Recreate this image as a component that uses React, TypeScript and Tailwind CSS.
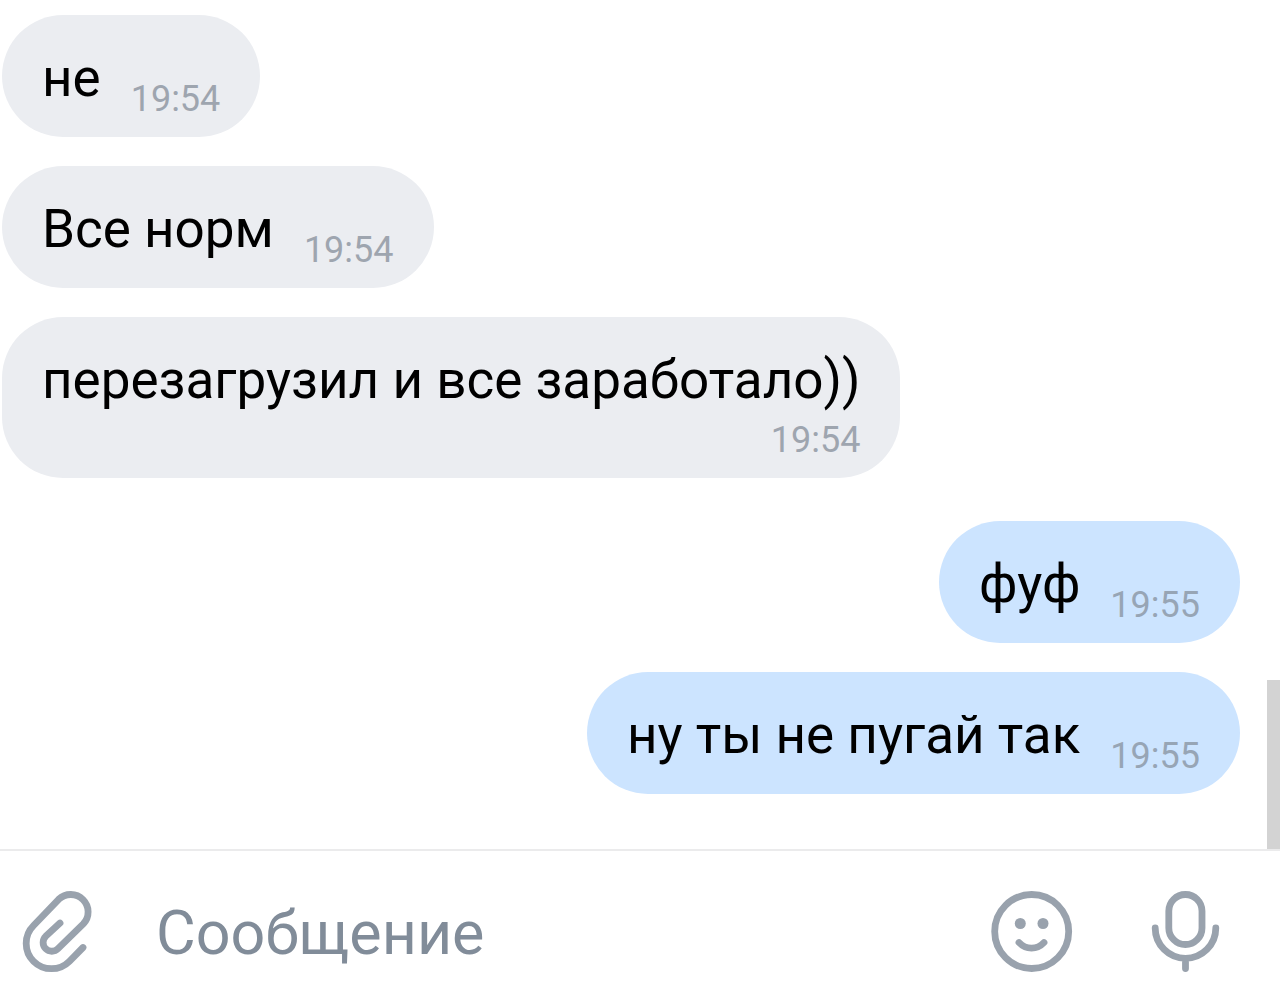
import clsx from "clsx";

type Message = {
  id: number;
  text: string;
  time: string;
  timeBelow?: boolean;
};

type Group = {
  own: boolean;
  messages: Message[];
};

const groups: Group[] = [
  {
    own: false,
    messages: [
      { id: 1, text: "не", time: "19:54" },
      { id: 2, text: "Все норм", time: "19:54" },
      { id: 3, text: "перезагрузил и все заработало))", time: "19:54", timeBelow: true },
    ],
  },
  {
    own: true,
    messages: [
      { id: 4, text: "фуф", time: "19:55" },
      { id: 5, text: "ну ты не пугай так", time: "19:55" },
    ],
  },
];

function Bubble({ message, own }: { message: Message; own: boolean }) {
  const { text, time, timeBelow } = message;
  return (
    <li
      className={clsx(
        "flex max-w-full rounded-[61px] px-10 pt-[29px] pb-4",
        own ? "bg-[#cce4ff]" : "bg-[#ebedf1]",
        timeBelow ? "flex-col gap-1" : "items-end gap-[30px]",
      )}
    >
      <p className={clsx("text-[53px] leading-[68px] text-black", !timeBelow && "pb-[9px]")}>{text}</p>
      <time className={clsx("self-end text-[36px] leading-[44px]", own ? "text-[#97a5b5]" : "text-[#9ea5af]")}>
        {time}
      </time>
    </li>
  );
}

function PaperclipIcon() {
  return (
    <svg viewBox="0 0 120 120" className="size-[120px]" fill="none" stroke="currentColor" strokeWidth="6.8" strokeLinecap="round" strokeLinejoin="round">
      <path d="M60 52 L45.7 65.3 A8.7 8.7 0 0 0 58 77.7 L83.3 52.9 A17.4 17.4 0 0 0 58.7 28.3 L33.6 54.5 A25.3 25.3 0 0 0 69.4 90.3 L83 76.5" />
    </svg>
  );
}

function SmileIcon() {
  return (
    <svg viewBox="0 0 120 120" className="size-[120px]" fill="none" stroke="currentColor" strokeWidth="6.8" strokeLinecap="round">
      <circle cx="61.7" cy="60.5" r="37" />
      <path d="M49 71.5 C56 79 67 79 74 71.5" />
      <circle cx="50.3" cy="52.5" r="5.5" fill="currentColor" stroke="none" />
      <circle cx="73" cy="52.5" r="5.5" fill="currentColor" stroke="none" />
    </svg>
  );
}

function MicIcon() {
  return (
    <svg viewBox="0 0 120 120" className="size-[120px]" fill="none" stroke="currentColor" strokeWidth="6.8" strokeLinecap="round">
      <rect x="38.8" y="23.5" width="33.2" height="50" rx="16.6" />
      <path d="M25.2 57 A30.3 30.3 0 0 0 85.8 57 M55.5 88 V97.5" />
    </svg>
  );
}

export default function App() {
  return (
    <div className="flex min-h-screen flex-col bg-white font-[Roboto,sans-serif]">
      <main className="flex flex-1">
        <div className="flex flex-1 flex-col gap-[43px] pt-[15px] pr-[27px] pl-[2px]">
          {groups.map((group, i) => (
            <ul key={i} className={clsx("flex flex-col gap-[29px]", group.own ? "items-end" : "items-start")}>
              {group.messages.map((message) => (
                <Bubble key={message.id} message={message} own={group.own} />
              ))}
            </ul>
          ))}
        </div>
        {/* Scrollbar */}
        <div className="h-[169px] w-[13px] self-end bg-[#d3d3d3]" />
      </main>
      <form className="flex items-center border-t-2 border-[#ebebec] pt-5 pr-[30px] pb-4 text-[#99a2ad]">
        <button type="button" aria-label="Прикрепить">
          <PaperclipIcon />
        </button>
        <input
          aria-label="Сообщение"
          placeholder="Сообщение"
          className="min-w-0 flex-1 pt-1 pl-9 text-[61px] leading-[72px] outline-none placeholder:text-[#818c99]"
        />
        <div className="flex gap-10">
          <button type="button" aria-label="Эмодзи">
            <SmileIcon />
          </button>
          <button type="button" aria-label="Голосовое сообщение">
            <MicIcon />
          </button>
        </div>
      </form>
    </div>
  );
}
